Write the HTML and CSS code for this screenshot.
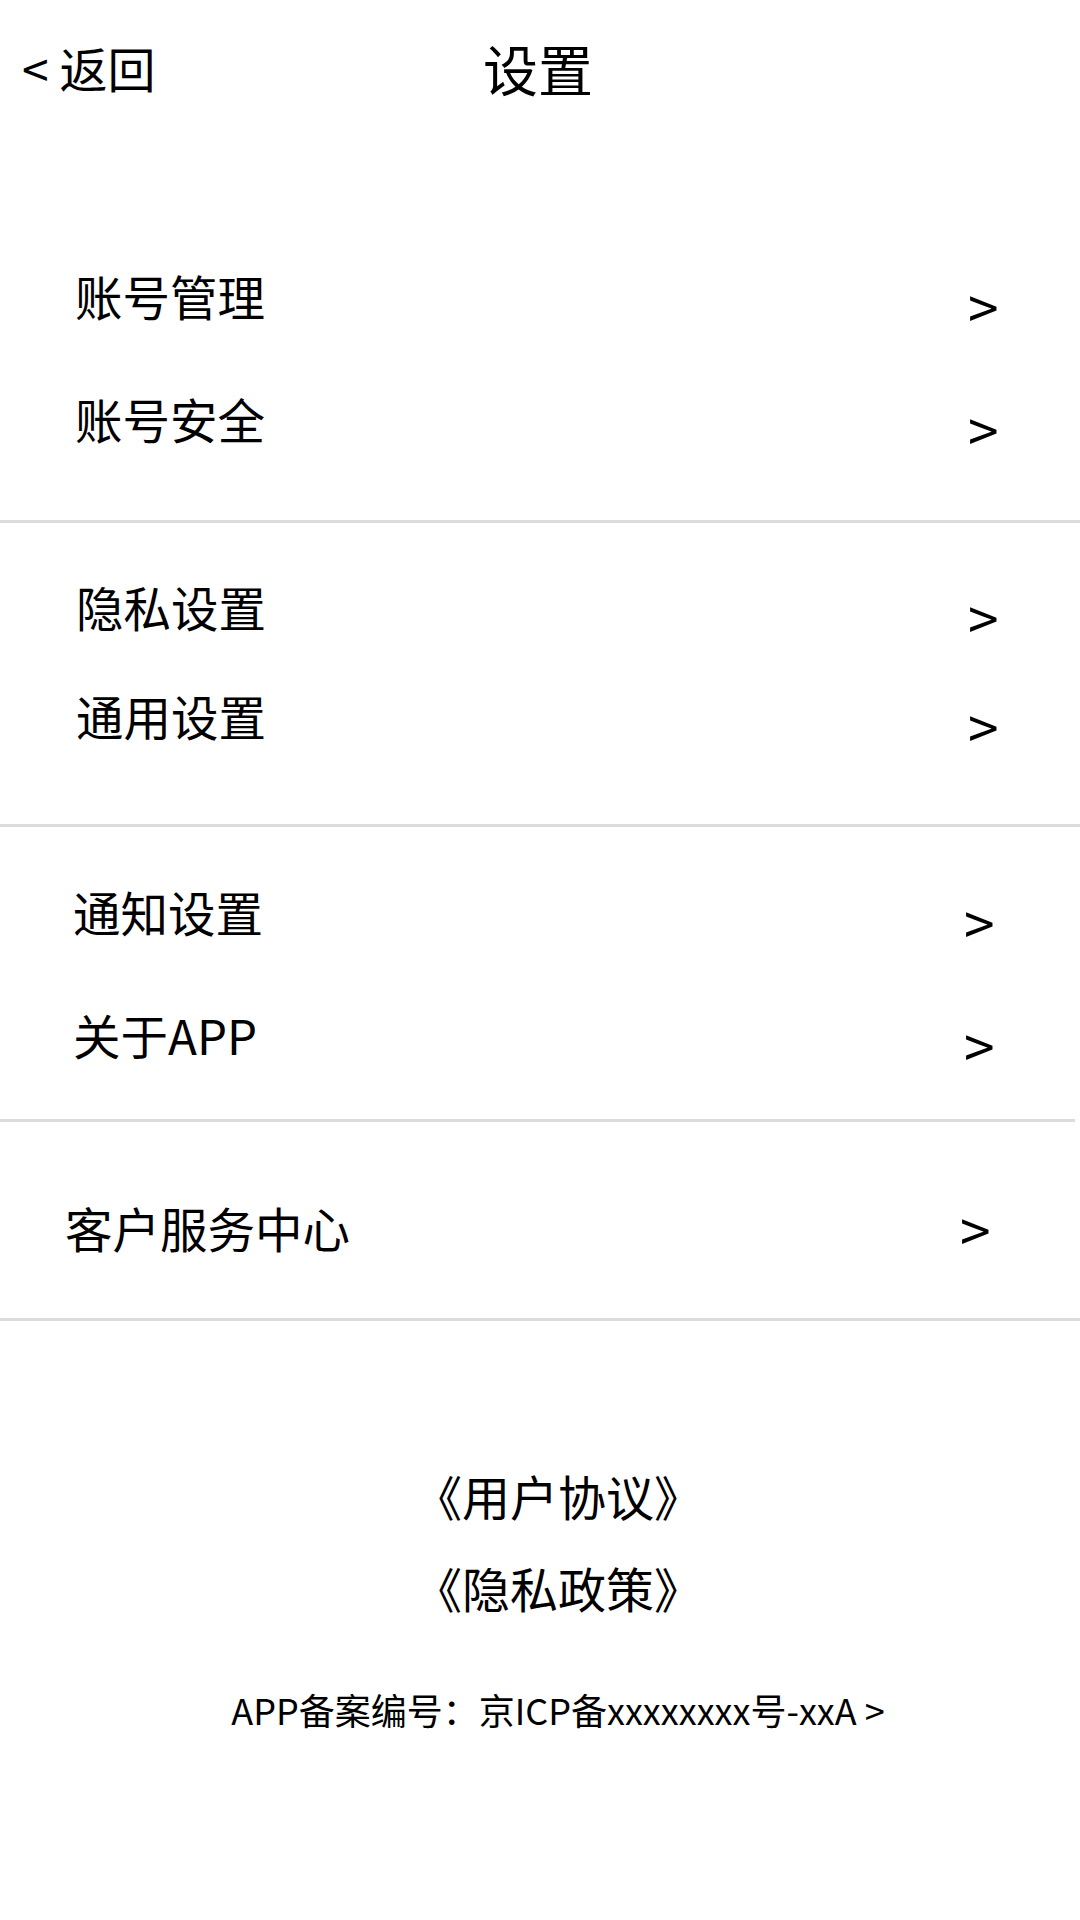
FILE: index.html
```html
<!DOCTYPE html>
<html lang="zh-CN">
<head>
<meta charset="utf-8">
<title>设置</title>
<link rel="stylesheet" href="styles.css">
</head>
<body>
<div class="page">
  <header class="topbar">
    <div class="back">&lt; 返回</div>
    <div class="title">设置</div>
    <div class="spacer"></div>
  </header>

  <section class="group g1">
    <div class="row"><span class="label">账号管理</span><span class="arrow">&gt;</span></div>
    <div class="row r2"><span class="label">账号安全</span><span class="arrow">&gt;</span></div>
  </section>

  <section class="group g2">
    <div class="row"><span class="label">隐私设置</span><span class="arrow">&gt;</span></div>
    <div class="row r2"><span class="label">通用设置</span><span class="arrow">&gt;</span></div>
  </section>

  <section class="group g3">
    <div class="row"><span class="label">通知设置</span><span class="arrow">&gt;</span></div>
    <div class="row r2"><span class="label">关于APP</span><span class="arrow">&gt;</span></div>
  </section>

  <section class="group g4">
    <div class="row"><span class="label">客户服务中心</span><span class="arrow">&gt;</span></div>
  </section>

  <footer class="footer">
    <div class="link">《用户协议》</div>
    <div class="link">《隐私政策》</div>
    <div class="icp">APP备案编号：京ICP备xxxxxxxx号-xxA &gt;</div>
  </footer>
</div>
</body>
</html>
```

FILE: styles.css
```css
html, body {
  margin: 0;
  padding: 0;
  background: #ffffff;
}

body {
  font-family: "Noto Sans CJK SC", "Noto Sans", sans-serif;
  color: #000000;
}

.page {
  width: 1080px;
  min-height: 1920px;
  background: #ffffff;
}

/* Header */
.topbar {
  display: grid;
  grid-template-columns: 1fr auto 1fr;
  align-items: center;
  height: 134px;
  padding-left: 22px;
  padding-right: 22px;
}

.back {
  font-size: 48px;
  line-height: 134px;
  white-space: nowrap;
}

.title {
  font-size: 55px;
  line-height: 130px;
  padding-right: 4px;
}

/* Groups */
.group {
  border-bottom: 3px solid #dcdcdc;
}

.row {
  display: flex;
  align-items: flex-start;
  height: 100px;
}

.label {
  flex: 1;
  font-size: 47.5px;
  line-height: 100px;
  white-space: nowrap;
}

.arrow {
  width: 40px;
  font-size: 55px;
  line-height: 100px;
  margin-top: 9px;
}

.g1 {
  padding: 112px 72px 51px 75px;
}
.g1 .r2 {
  margin-top: 23px;
}

.g2 {
  padding: 34px 72px 58px 76px;
}
.g2 .r2 {
  margin-top: 9px;
}

.g3 {
  padding: 35px 71px 34px 73px;
  margin-right: 5px;
}
.g3 .r2 {
  margin-top: 23px;
}

.g4 {
  padding: 56px 80px 40px 65px;
}
.g4 .arrow {
  margin-top: 0;
}

/* Footer */
.footer {
  display: flex;
  flex-direction: column;
  align-items: center;
  padding-top: 128px;
  padding-left: 36px;
}

.link {
  font-size: 48px;
  line-height: 92px;
  white-space: nowrap;
}

.icp {
  margin-top: 46px;
  font-size: 36px;
  line-height: 60px;
  white-space: nowrap;
}
```
